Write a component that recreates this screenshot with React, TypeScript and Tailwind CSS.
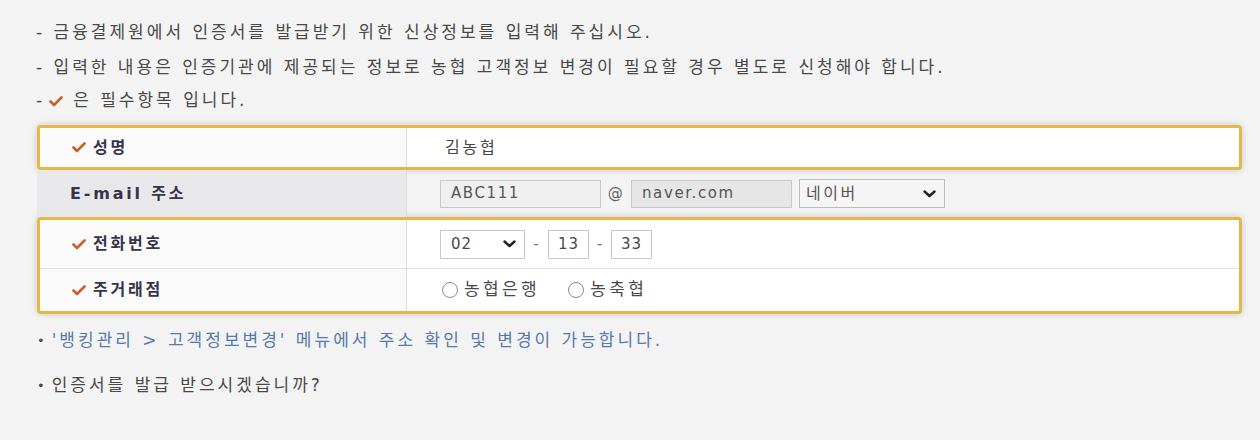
import { FC, ReactNode } from 'react';

const font = "font-['DejaVu_Sans','Noto_Sans_CJK_KR',sans-serif]";

const Check: FC<{ className?: string }> = ({ className = 'mr-[7px]' }) => (
  <svg width="14" height="11" viewBox="0 0 14 11" className={`${className} shrink-0`}>
    <path d="M1.5 5.5 L5 9 L12.5 1.5" fill="none" stroke="#c4622c" strokeWidth="2.6" strokeLinecap="round" strokeLinejoin="round" />
  </svg>
);

const Chevron: FC = () => (
  <svg width="13" height="8" viewBox="0 0 13 8">
    <path d="M1.5 1.5 L6.5 6 L11.5 1.5" fill="none" stroke="#222" strokeWidth="2.4" strokeLinecap="round" strokeLinejoin="round" />
  </svg>
);

const Label: FC<{ children: ReactNode; required?: boolean }> = ({ children, required }) => (
  <div className="w-[367px] shrink-0 flex items-center pl-[32px] border-r border-[#dcdcdc] bg-[#fafafa] text-[16px] font-bold tracking-[2.8px] text-[#34344a]">
    {required && <Check />}
    {children}
  </div>
);

const Box: FC<{ children: ReactNode }> = ({ children }) => (
  <div className="border-[3px] border-[#e6b744] rounded-[4px] bg-white shadow-[0_0_7px_rgba(0,0,0,0.18)]">
    {children}
  </div>
);

const Radio: FC<{ label: string }> = ({ label }) => (
  <div className="flex items-center gap-[6px]">
    <span className="w-[16px] h-[16px] rounded-full border border-[#8a8a8a] bg-white" />
    <span>{label}</span>
  </div>
);

const App: FC = () => {
  return (
    <div className={`${font} w-[1260px] h-[440px] bg-[#f3f3f3] text-[17px] text-[#484848] tracking-[3px]`}>
      <div className="pl-[36px] pt-[15px]">
        <div className="h-[35px] flex items-center">- 금융결제원에서 인증서를 발급받기 위한 신상정보를 입력해 주십시오.</div>
        <div className="h-[35px] flex items-center">- 입력한 내용은 인증기관에 제공되는 정보로 농협 고객정보 변경이 필요할 경우 별도로 신청해야 합니다.</div>
        <div className="h-[32px] flex items-center">
          -<Check className="ml-[4px] mr-[10px]" />은 필수항목 입니다.
        </div>
      </div>

      <div className="ml-[37px] w-[1205px] mt-[8px]">
        <Box>
          <div className="flex h-[39px]">
            <Label required>성명</Label>
            <div className="flex items-center pl-[38px] text-[16px] tracking-[2.8px] text-[#444]">김농협</div>
          </div>
        </Box>

        <div className="flex h-[47px] text-[15px] tracking-[1.6px] text-[#555]">
          <div className="w-[370px] shrink-0 flex items-center pl-[33px] border-r border-[#dcdcdc] bg-[#e8e8ea] text-[16px] font-bold tracking-[2.8px] text-[#34344a]">
            E-mail 주소
          </div>
          <div className="flex items-center pl-[33px]">
            <div className="w-[161px] h-[28px] border border-[#c8c8c8] bg-[#efefef] flex items-center pl-[10px]">ABC111</div>
            <span className="w-[30px] text-center text-[#666]">@</span>
            <div className="w-[161px] h-[28px] border border-[#c8c8c8] bg-[#e6e6e6] flex items-center pl-[10px]">naver.com</div>
            <div className="ml-[7px] w-[146px] h-[29px] border border-[#bdbdbd] bg-[#f5f5f5] flex items-center justify-between pl-[6px] pr-[8px] text-[16px] tracking-[2.5px]">
              <span>네이버</span>
              <Chevron />
            </div>
          </div>
        </div>

        <Box>
          <div className="flex h-[49px] border-b border-[#e0e0e6] text-[15px] tracking-[1px]">
            <Label required>전화번호</Label>
            <div className="flex items-center pl-[33px]">
              <div className="w-[85px] h-[29px] border border-[#c8c8c8] bg-white flex items-center justify-between pl-[10px] pr-[8px]">
                <span>02</span>
                <Chevron />
              </div>
              <span className="w-[23px] text-center text-[#777]">-</span>
              <div className="w-[41px] h-[29px] border border-[#c8c8c8] bg-white flex items-center justify-center">13</div>
              <span className="w-[22px] text-center text-[#777]">-</span>
              <div className="w-[41px] h-[29px] border border-[#c8c8c8] bg-white flex items-center justify-center">33</div>
            </div>
          </div>
          <div className="flex h-[42px] text-[17px] tracking-[3.4px]">
            <Label required>주거래점</Label>
            <div className="flex items-center pl-[35px] gap-[28px]">
              <Radio label="농협은행" />
              <Radio label="농축협" />
            </div>
          </div>
        </Box>
      </div>

      <div className="pl-[37px]">
        <div className="h-[52px] flex items-center pt-[2px] text-[#5679ad]">
          <span className="text-[#555] mr-[4px] text-[13px]">•</span>'뱅킹관리 &gt; 고객정보변경' 메뉴에서 주소 확인 및 변경이 가능합니다.
        </div>
        <div className="h-[40px] flex items-center">
          <span className="mr-[4px] text-[13px]">•</span>인증서를 발급 받으시겠습니까?
        </div>
      </div>
    </div>
  );
};

export default App;
